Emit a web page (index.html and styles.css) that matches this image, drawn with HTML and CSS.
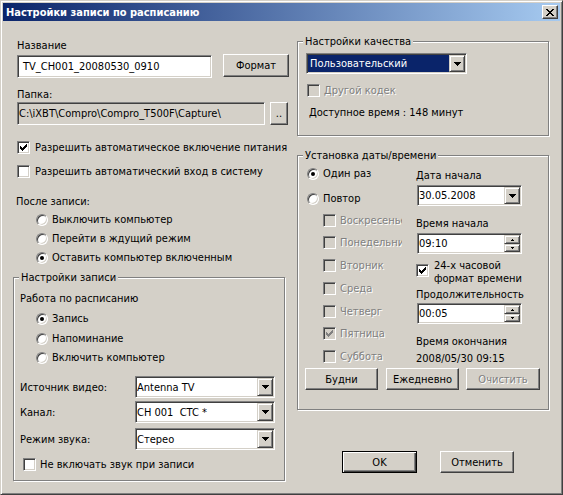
FILE: index.html
```html
<!DOCTYPE html>
<html lang="ru">
<head>
<meta charset="utf-8">
<title>Настройки записи по расписанию</title>
<link rel="stylesheet" href="styles.css">
</head>
<body>
<div class="window">
  <div class="titlebar">
    <span class="title">Настройки записи по расписанию</span>
    <span class="close-btn"><svg class="close-icon" width="8" height="7" viewBox="0 0 8 7" shape-rendering="crispEdges"><path d="M0 0h2v1H0zM6 0h2v1H6zM1 1h2v1H1zM5 1h2v1H5zM2 2h4v1H2zM3 3h2v1H3zM2 4h4v1H2zM1 5h2v1H1zM5 5h2v1H5zM0 6h2v1H0zM6 6h2v1H6z"/></svg></span>
  </div>
  <div class="content">
    <div class="col-left">
      <div class="text name-lbl">Название</div>
      <div class="name-row">
        <div class="field name-field">TV_CH001_20080530_0910</div>
        <div class="btn format-btn">Формат</div>
      </div>
      <div class="text folder-lbl">Папка:</div>
      <div class="folder-row">
        <div class="field field-ro folder-field">C:\iXBT\Compro\Compro_T500F\Capture\</div>
        <div class="btn browse-btn">..</div>
      </div>
      <div class="check power-chk"><span class="box"><svg class="tick" width="11" height="11" viewBox="1 1 11 11" shape-rendering="crispEdges"><path d="M3 5h1v3H3zM4 6h1v3H4zM5 7h1v3H5zM6 6h1v3H6zM7 5h1v3H7zM8 4h1v3H8zM9 3h1v3H9z"/></svg></span><span>Разрешить автоматическое включение питания</span></div>
      <div class="check login-chk"><span class="box"></span><span>Разрешить автоматический вход в систему</span></div>
      <div class="text after-lbl">После записи:</div>
      <div class="radio-row after-r1"><span class="radio"></span><span>Выключить компьютер</span></div>
      <div class="radio-row after-r2"><span class="radio"></span><span>Перейти в ждущий режим</span></div>
      <div class="radio-row after-r3"><span class="radio"><span class="dot"></span></span><span>Оставить компьютер включенным</span></div>

      <fieldset class="group rec-group">
        <legend>Настройки записи</legend>
        <div class="text sched-lbl">Работа по расписанию</div>
        <div class="radio-row rec-r1"><span class="radio"><span class="dot"></span></span><span>Запись</span></div>
        <div class="radio-row rec-r2"><span class="radio"></span><span>Напоминание</span></div>
        <div class="radio-row rec-r3"><span class="radio"></span><span>Включить компьютер</span></div>
        <div class="sel-row sel-1">
          <span class="text sel-lbl">Источник видео:</span>
          <div class="combo sel-combo"><span class="combo-text">Antenna TV</span><span class="combo-btn"><svg class="arrow" width="7" height="4" viewBox="0 0 7 4" shape-rendering="crispEdges"><path d="M0 0h7v1H0zM1 1h5v1H1zM2 2h3v1H2zM3 3h1v1H3z"/></svg></span></div>
        </div>
        <div class="sel-row sel-2">
          <span class="text sel-lbl">Канал:</span>
          <div class="combo sel-combo"><span class="combo-text">CH 001&nbsp;&nbsp;CTC *</span><span class="combo-btn"><svg class="arrow" width="7" height="4" viewBox="0 0 7 4" shape-rendering="crispEdges"><path d="M0 0h7v1H0zM1 1h5v1H1zM2 2h3v1H2zM3 3h1v1H3z"/></svg></span></div>
        </div>
        <div class="sel-row sel-3">
          <span class="text sel-lbl">Режим звука:</span>
          <div class="combo sel-combo"><span class="combo-text">Стерео</span><span class="combo-btn"><svg class="arrow" width="7" height="4" viewBox="0 0 7 4" shape-rendering="crispEdges"><path d="M0 0h7v1H0zM1 1h5v1H1zM2 2h3v1H2zM3 3h1v1H3z"/></svg></span></div>
        </div>
        <div class="check mute-chk"><span class="box"></span><span>Не включать звук при записи</span></div>
      </fieldset>
    </div>

    <div class="col-right">
      <fieldset class="group quality-group">
        <legend>Настройки качества</legend>
        <div class="combo quality-combo"><span class="combo-text combo-sel">Пользовательский</span><span class="combo-btn"><svg class="arrow" width="7" height="4" viewBox="0 0 7 4" shape-rendering="crispEdges"><path d="M0 0h7v1H0zM1 1h5v1H1zM2 2h3v1H2zM3 3h1v1H3z"/></svg></span></div>
        <div class="check codec-chk"><span class="box box-dis"></span><span class="dis">Другой кодек</span></div>
        <div class="text avail">Доступное время : 148 минут</div>
      </fieldset>

      <fieldset class="group date-group">
        <legend>Установка даты/времени</legend>
        <div class="date-cols">
          <div class="date-left">
            <div class="radio-row once-r"><span class="radio"><span class="dot"></span></span><span>Один раз</span></div>
            <div class="radio-row repeat-r"><span class="radio"></span><span>Повтор</span></div>
            <div class="check day d1"><span class="box box-dis"></span><span class="dis day-lbl">Воскресенье</span></div>
            <div class="check day d2"><span class="box box-dis"></span><span class="dis day-lbl">Понедельник</span></div>
            <div class="check day d3"><span class="box box-dis"></span><span class="dis day-lbl">Вторник</span></div>
            <div class="check day d4"><span class="box box-dis"></span><span class="dis day-lbl">Среда</span></div>
            <div class="check day d5"><span class="box box-dis"></span><span class="dis day-lbl">Четверг</span></div>
            <div class="check day d6"><span class="box box-dis"><svg class="tick" width="11" height="11" viewBox="1 1 11 11" shape-rendering="crispEdges"><path d="M3 5h1v3H3zM4 6h1v3H4zM5 7h1v3H5zM6 6h1v3H6zM7 5h1v3H7zM8 4h1v3H8zM9 3h1v3H9z"/></svg></span><span class="dis day-lbl">Пятница</span></div>
            <div class="check day d7"><span class="box box-dis"></span><span class="dis day-lbl">Суббота</span></div>
          </div>
          <div class="date-right">
            <div class="text start-date-lbl">Дата начала</div>
            <div class="combo date-combo"><span class="combo-text">30.05.2008</span><span class="combo-btn"><svg class="arrow" width="7" height="4" viewBox="0 0 7 4" shape-rendering="crispEdges"><path d="M0 0h7v1H0zM1 1h5v1H1zM2 2h3v1H2zM3 3h1v1H3z"/></svg></span></div>
            <div class="text start-time-lbl">Время начала</div>
            <div class="combo spinbox start-spin"><span class="combo-text">09:10</span><span class="spin-col"><span class="spin-btn spin-up"><svg class="arrow" width="3" height="2" viewBox="0 0 3 2" shape-rendering="crispEdges"><path d="M1 0h1v1H1zM0 1h3v1H0z"/></svg></span><span class="spin-btn spin-down"><svg class="arrow" width="3" height="2" viewBox="0 0 3 2" shape-rendering="crispEdges"><path d="M0 0h3v1H0zM1 1h1v1H1z"/></svg></span></span></div>
            <div class="fmt-chk"><span class="box"><svg class="tick" width="11" height="11" viewBox="1 1 11 11" shape-rendering="crispEdges"><path d="M3 5h1v3H3zM4 6h1v3H4zM5 7h1v3H5zM6 6h1v3H6zM7 5h1v3H7zM8 4h1v3H8zM9 3h1v3H9z"/></svg></span><span class="fmt-text">24-х часовой<br>формат времени</span></div>
            <div class="text dur-lbl">Продолжительность</div>
            <div class="combo spinbox dur-spin"><span class="combo-text">00:05</span><span class="spin-col"><span class="spin-btn spin-up"><svg class="arrow" width="3" height="2" viewBox="0 0 3 2" shape-rendering="crispEdges"><path d="M1 0h1v1H1zM0 1h3v1H0z"/></svg></span><span class="spin-btn spin-down"><svg class="arrow" width="3" height="2" viewBox="0 0 3 2" shape-rendering="crispEdges"><path d="M0 0h3v1H0zM1 1h1v1H1z"/></svg></span></span></div>
            <div class="text end-lbl">Время окончания</div>
            <div class="text end-val">2008/05/30 09:15</div>
          </div>
        </div>
        <div class="day-btns">
          <div class="btn b-week">Будни</div>
          <div class="btn b-daily">Ежедневно</div>
          <div class="btn b-clear"><span class="dis">Очистить</span></div>
        </div>
      </fieldset>

      <div class="dlg-btns">
        <div class="btn ok-btn">OK</div>
        <div class="btn cancel-btn">Отменить</div>
      </div>
    </div>
  </div>
</div>
</body>
</html>
```

FILE: styles.css
```css
* { box-sizing: border-box; }
html, body { margin: 0; padding: 0; }
body {
  width: 563px; height: 495px; overflow: hidden;
  background: #d4d0c8;
  font-family: "DejaVu Sans Condensed", "DejaVu Sans", "Liberation Sans", sans-serif;
  font-size: 11px; color: #000;
}
.window {
  width: 563px; height: 495px; padding: 2px;
  background: #d4d0c8;
  border: 1px solid; border-color: #d4d0c8 #404040 #404040 #d4d0c8;
  box-shadow: inset 1px 1px #fff, inset -1px -1px #808080;
}
.titlebar {
  height: 18px; display: flex; align-items: center;
  padding: 0 2px 0 3px;
  background: linear-gradient(to right, #0a246a, #a6caf0);
}
.title { color: #fff; font-weight: bold; white-space: nowrap; line-height: 13px; }
.close-btn {
  margin-left: auto; width: 16px; height: 14px;
  display: flex; align-items: center; justify-content: center;
  background: #d4d0c8;
  border: 1px solid; border-color: #fff #404040 #404040 #fff;
  box-shadow: inset -1px -1px #808080, inset 1px 1px #d4d0c8;
}
.close-icon { display: block; fill: #000; }

.content { display: flex; padding-left: 10px; }
.col-left { width: 276px; margin-right: 8px; display: flex; flex-direction: column; flex: none; }
.col-right { width: 252px; display: flex; flex-direction: column; flex: none; }

.text { height: 13px; line-height: 13px; white-space: nowrap; }
.dis { color: #808080; text-shadow: 1px 1px 0 #fff; }

/* sunken edit field */
.field, .combo {
  border: 1px solid; border-color: #808080 #fff #fff #808080;
  box-shadow: inset 1px 1px #404040, inset -1px -1px #d4d0c8;
  background: #fff;
}
.field { display: flex; align-items: center; white-space: nowrap; overflow: hidden; }
.field-ro { background: #d4d0c8; }

/* push button */
.btn {
  display: flex; align-items: center; justify-content: center;
  background: #d4d0c8; white-space: nowrap;
  border: 1px solid; border-color: #fff #404040 #404040 #fff;
  box-shadow: inset -1px -1px #808080, inset 1px 1px #d4d0c8;
}

/* checkbox */
.check { display: flex; align-items: center; height: 13px; white-space: nowrap; }
.box {
  width: 13px; height: 13px; flex: none; margin-right: 5px;
  border: 1px solid; border-color: #808080 #fff #fff #808080;
  box-shadow: inset 1px 1px #404040, inset -1px -1px #d4d0c8;
  background: #fff;
}
.box .tick { display: block; fill: #000; }
.box-dis { background: #d4d0c8; }
.box-dis .tick { fill: #808080; }

/* radio */
.radio-row { display: flex; align-items: center; height: 13px; white-space: nowrap; }
.radio {
  width: 12px; height: 12px; flex: none; margin-right: 4px;
  border-radius: 50%;
  border: 1px solid; border-color: #808080 #fff #fff #808080;
  box-shadow: inset 1px 1px #404040, inset -1px -1px #d4d0c8;
  background: #fff;
  display: flex; align-items: center; justify-content: center;
}
.dot { width: 4px; height: 4px; border-radius: 50%; background: #000; }

/* combo */
.combo { display: flex; padding: 1px; }
.combo-text { flex: 1; display: flex; align-items: center; white-space: nowrap; overflow: hidden; }
.combo-btn, .spin-btn {
  flex: none; display: flex; align-items: center; justify-content: center;
  background: #d4d0c8;
  border: 1px solid; border-color: #d4d0c8 #404040 #404040 #d4d0c8;
  box-shadow: inset 1px 1px #fff, inset -1px -1px #808080;
}
.combo-btn { width: 16px; }
.arrow { display: block; fill: #000; }
.spin-col { width: 16px; flex: none; display: flex; flex-direction: column; }
.spin-up { height: 9px; }
.spin-down { height: 8px; }

/* group box */
.group {
  margin: 0; padding: 0; min-width: 0;
  border: 1px solid #808080;
  box-shadow: inset 1px 1px #fff, 1px 1px #fff;
}
.group legend {
  margin-left: 5px; padding: 0 2px;
  height: 13px; line-height: 13px; white-space: nowrap;
  background: #d4d0c8;
}

/* left column */
.name-lbl { margin: 18px 0 0 4px; }
.name-row { display: flex; align-items: flex-start; height: 24px; margin: 2px 0 0 4px; }
.name-field { width: 195px; height: 23px; margin-top: 1px; padding-left: 5px; }
.format-btn { width: 66px; height: 23px; margin-left: 11px; }
.folder-lbl { margin: 10px 0 0 4px; }
.folder-row { display: flex; height: 23px; margin: 1px 0 0 4px; }
.folder-field { width: 248px; padding-left: 1px; }
.browse-btn { width: 18px; margin-left: 5px; }
.power-chk { margin: 16px 0 0 4px; }
.login-chk { margin: 11px 0 0 4px; }
.after-lbl { margin: 17px 0 0 3px; }
.after-r1 { margin: 5px 0 0 23px; }
.after-r2, .after-r3 { margin: 6px 0 0 23px; }

.rec-group { width: 272px; margin-top: 7px; padding-bottom: 9px; }
.sched-lbl { margin: 8px 0 0 6px; }
.rec-r1, .rec-r2 { margin: 7px 0 0 22px; }
.rec-r3 { margin: 6px 0 0 22px; }
.sel-row { display: flex; align-items: center; height: 22px; padding-left: 6px; }
.sel-lbl { width: 115px; flex: none; }
.sel-combo { width: 140px; height: 22px; flex: none; }
.sel-1 { margin-top: 12px; }
.sel-2 { margin-top: 3px; }
.sel-3 { margin-top: 5px; }
.mute-chk { margin: 8px 0 0 9px; }
.mute-chk .box { margin-right: 4px; }

/* right column */
.quality-group { margin-top: 14px; padding-bottom: 16px; }
.quality-combo { width: 161px; height: 21px; margin: 5px 0 0 8px; }
.combo-sel { background: #0a246a; color: #fff; padding-left: 2px; }
.codec-chk { margin: 10px 0 0 9px; }
.codec-chk .box { margin-right: 4px; }
.avail { margin: 9px 0 0 11px; }

.date-group { margin-top: 13px; padding-bottom: 19px; }
.date-cols { display: flex; }
.date-left { width: 96px; margin-left: 9px; flex: none; overflow: hidden; }
.date-right { width: 107px; margin-left: 13px; flex: none; }
.once-r { margin-top: 5px; }
.repeat-r { margin-top: 12px; }
.day { margin-left: 16px; }
.day .box { margin-right: 4px; }
.day-lbl { width: 62px; overflow: hidden; flex: none; }
.d1, .d2, .d6 { margin-top: 9px; }
.d3, .d4, .d5, .d7 { margin-top: 10px; }

.start-date-lbl { margin-top: 7px; }
.date-combo { width: 105px; height: 21px; margin: 3px 0 0 1px; }
.start-time-lbl { margin-top: 11px; }
.spinbox { width: 105px; height: 21px; margin-left: 1px; }
.start-spin { margin-top: 3px; }
.fmt-chk { display: flex; align-items: flex-start; height: 26px; margin-top: 5px; }
.fmt-chk .box { margin-top: 5px; margin-right: 5px; }
.fmt-text { line-height: 13px; white-space: nowrap; }
.dur-lbl { margin-top: 3px; }
.dur-spin { margin-top: 2px; }
.end-lbl { margin-top: 11px; }
.end-val { margin-top: 4px; }

.day-btns { display: flex; height: 22px; margin: 3px 0 0 7px; }
.b-week, .b-daily { width: 73px; }
.b-daily { margin-left: 8px; }
.b-clear { width: 74px; margin-left: 7px; }

.dlg-btns { display: flex; margin: 41px 0 0 45px; }
.ok-btn {
  width: 75px; height: 22px;
  border-color: #000;
  box-shadow: inset 1px 1px #fff, inset -1px -1px #404040, inset -2px -2px #808080;
}
.cancel-btn { width: 74px; height: 22px; margin-left: 23px; }
```
